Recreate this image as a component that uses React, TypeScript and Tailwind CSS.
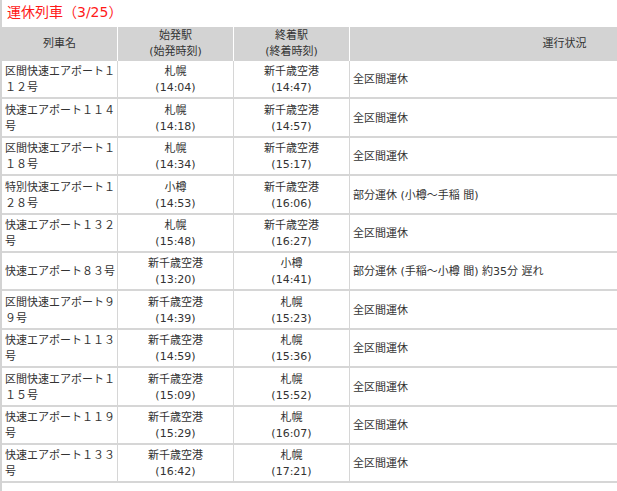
type Train = {
  name: string[];
  from: string;
  fromTime: string;
  to: string;
  toTime: string;
  status: string;
};

const trains: Train[] = [
  { name: ['区間快速エアポート１', '１２号'], from: '札幌', fromTime: '(14:04)', to: '新千歳空港', toTime: '(14:47)', status: '全区間運休' },
  { name: ['快速エアポート１１４', '号'], from: '札幌', fromTime: '(14:18)', to: '新千歳空港', toTime: '(14:57)', status: '全区間運休' },
  { name: ['区間快速エアポート１', '１８号'], from: '札幌', fromTime: '(14:34)', to: '新千歳空港', toTime: '(15:17)', status: '全区間運休' },
  { name: ['特別快速エアポート１', '２８号'], from: '小樽', fromTime: '(14:53)', to: '新千歳空港', toTime: '(16:06)', status: '部分運休 (小樽～手稲 間)' },
  { name: ['快速エアポート１３２', '号'], from: '札幌', fromTime: '(15:48)', to: '新千歳空港', toTime: '(16:27)', status: '全区間運休' },
  { name: ['快速エアポート８３号'], from: '新千歳空港', fromTime: '(13:20)', to: '小樽', toTime: '(14:41)', status: '部分運休 (手稲～小樽 間) 約35分 遅れ' },
  { name: ['区間快速エアポート９', '９号'], from: '新千歳空港', fromTime: '(14:39)', to: '札幌', toTime: '(15:23)', status: '全区間運休' },
  { name: ['快速エアポート１１３', '号'], from: '新千歳空港', fromTime: '(14:59)', to: '札幌', toTime: '(15:36)', status: '全区間運休' },
  { name: ['区間快速エアポート１', '１５号'], from: '新千歳空港', fromTime: '(15:09)', to: '札幌', toTime: '(15:52)', status: '全区間運休' },
  { name: ['快速エアポート１１９', '号'], from: '新千歳空港', fromTime: '(15:29)', to: '札幌', toTime: '(16:07)', status: '全区間運休' },
  { name: ['快速エアポート１３３', '号'], from: '新千歳空港', fromTime: '(16:42)', to: '札幌', toTime: '(17:21)', status: '全区間運休' },
];

const th = 'bg-[#d3d3d3] border-r border-white font-normal text-center align-middle py-0 leading-[16px]';
const td = 'border-r border-b-2 border-[#d6d6d6] align-middle pt-[3.4px] pb-[1px] leading-[16px]';

export default function App() {
  return (
    <div
      className="w-[617px] h-[491px] overflow-hidden bg-white text-[#333] border-l-2 border-[#d3d3d3]"
      style={{ fontFamily: '"DejaVu Sans", "Noto Sans CJK JP", sans-serif' }}
    >
      <h2 className="h-[27px] pl-[5px] pt-[1px] text-[14px] leading-[22px] font-normal text-[#ff1a1a]">
        運休列車（3/25）
      </h2>
      <table className="w-[778px] table-fixed border-separate border-spacing-0 text-[11px]">
        <colgroup>
          <col className="w-[116px]" />
          <col className="w-[116px]" />
          <col className="w-[116px]" />
          <col className="w-[430px]" />
        </colgroup>
        <thead>
          <tr className="h-[34px]">
            <th className={th}>列車名</th>
            <th className={th}>
              始発駅
              <br />
              (始発時刻)
            </th>
            <th className={th}>
              終着駅
              <br />
              (終着時刻)
            </th>
            <th className={th}>運行状況</th>
          </tr>
        </thead>
        <tbody>
          {trains.map((t, i) => (
            <tr key={i}>
              <td className={`${td} pl-[3px] pr-0 text-left whitespace-nowrap`}>
                {t.name.map((line, j) => (
                  <div key={j}>{line}</div>
                ))}
              </td>
              <td className={`${td} text-center`}>
                <div>{t.from}</div>
                <div>{t.fromTime}</div>
              </td>
              <td className={`${td} text-center`}>
                <div>{t.to}</div>
                <div>{t.toTime}</div>
              </td>
              <td className={`${td} pl-[3px] text-left`}>{t.status}</td>
            </tr>
          ))}
        </tbody>
      </table>
    </div>
  );
}
